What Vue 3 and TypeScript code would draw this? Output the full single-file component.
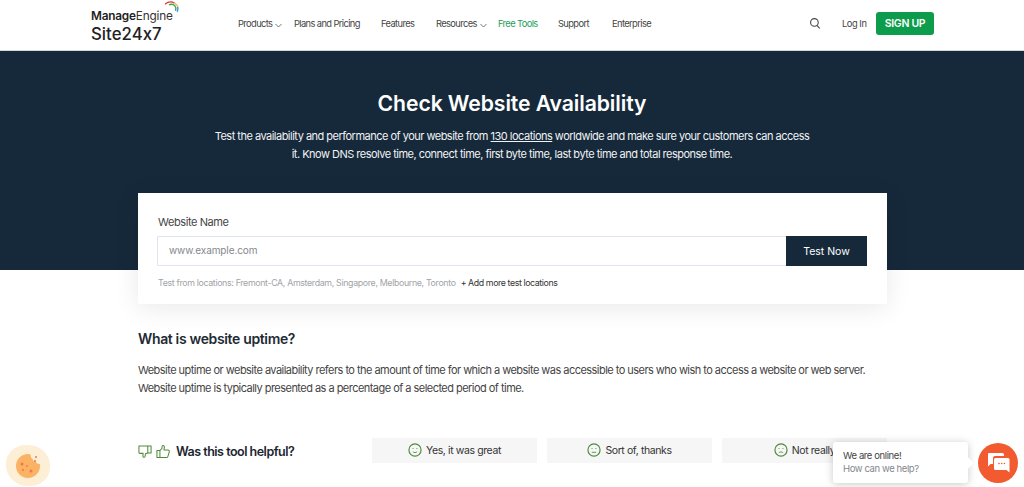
<script setup lang="ts">
const navItems: { label: string; caret?: boolean; active?: boolean; width: number }[] = [
  { label: 'Products', caret: true, width: 56 },
  { label: 'Plans and Pricing', width: 87 },
  { label: 'Features', width: 55 },
  { label: 'Resources', caret: true, width: 62 },
  { label: 'Free Tools', active: true, width: 60 },
  { label: 'Support', width: 54 },
  { label: 'Enterprise', width: 60 }
]
const options = [
  { label: 'Yes, it was great', mouth: 'M6.2 11.2c1.4 1.5 4.2 1.5 5.6 0' },
  { label: 'Sort of, thanks', mouth: 'M6.2 12h5.6' },
  { label: 'Not really', mouth: 'M6.2 12.6c1.4-1.5 4.2-1.5 5.6 0' }
]
</script>

<template>
  <div class="page">
    <header class="topbar">
      <div class="logo">
        <div class="me">
          <span class="me-bold">Manage</span><span class="me-light">Engine</span>
          <svg class="arc" width="16" height="14" viewBox="0 0 16 14" fill="none" stroke-width="1.300">
            <path d="M1 3.200C4 .8 8 .6 10.600 2.200" stroke="#e4342c" />
            <path d="M10.600 2.200c1.500.9 2.600 2 3.100 3.400" stroke="#f5b52e" />
            <path d="M13.700 5.600c.5 1.600.3 3.400-.5 5.200" stroke="#2f8fd0" />
            <path d="M5 3.800c2.200-.9 4.400-.5 5.800 1 1.100 1.200 1.300 3 .8 5" stroke="#3ca655" />
          </svg>
        </div>
        <div class="brand">Site24x7</div>
      </div>
      <nav class="nav">
        <a
          v-for="item in navItems"
          :key="item.label"
          class="nav-item"
          :class="{ active: item.active }"
          :style="{ width: item.width + 'px' }"
        >
          {{ item.label }}
          <svg v-if="item.caret" class="caret" width="7" height="5" viewBox="0 0 7 5" fill="none" stroke="#555" stroke-width=".8"><path d="M.5 1l3 3 3-3" /></svg>
        </a>
      </nav>
      <div class="actions">
        <svg width="10" height="11" viewBox="0 0 10 11" fill="none" stroke="#444" stroke-width="1.100"><circle cx="4.400" cy="4.400" r="3.800" /><path d="M7 7.300l2.700 3.200" /></svg>
        <a class="login">Log In</a>
        <a class="signup">SIGN UP</a>
      </div>
    </header>

    <section class="hero">
      <h1>Check Website Availability</h1>
      <p>
        Test the availability and performance of your website from <u>130 locations</u> worldwide and make sure your customers can access<br />
        it. Know DNS resolve time, connect time, first byte time, last byte time and total response time.
      </p>
    </section>

    <main class="content">
      <section class="card">
        <label class="field-label">Website Name</label>
        <div class="field">
          <div class="input">www.example.com</div>
          <button class="test">Test Now</button>
        </div>
        <div class="locations">
          <span class="loc-list">Test from locations: Fremont-CA, Amsterdam, Singapore, Melbourne, Toronto</span>
          <a class="add">+ Add more test locations</a>
        </div>
      </section>

      <section class="about">
        <h2>What is website uptime?</h2>
        <p>Website uptime or website availability refers to the amount of time for which a website was accessible to users who wish to access a website or web server. Website uptime is typically presented as a percentage of a selected period of time.</p>
      </section>

      <section class="feedback">
        <div class="question">
          <svg width="14" height="15" viewBox="0 0 15 15" fill="none" stroke="#4f8a3c" stroke-width="1.100" stroke-linejoin="round"><path d="M1 1.500h9.500v7.500L8 10l-.5 3c-.2 1-2 1-2.300-.2L5.500 9.500H2C1.300 9.500.8 9 1 8.200z" /><path d="M10.500 1.500H14V9h-3.500" /></svg>
          <svg class="up" width="14" height="15" viewBox="0 0 15 15" fill="none" stroke="#4f8a3c" stroke-width="1.100" stroke-linejoin="round"><path d="M1 6.500h3.200V14H1zM4.200 6.500L6.500 4V1.800c0-1 2.300-1 2.500.7l-.5 3.500H13c1 0 1.500 1 1.200 2l-1.500 5c-.2.700-.7 1-1.500 1h-7" /></svg>
          <strong>Was this tool helpful?</strong>
        </div>
        <div class="options">
          <button v-for="o in options" :key="o.label" class="option">
            <svg width="14" height="14" viewBox="0 0 18 18" fill="none" stroke="#4f8a3c" stroke-width="1.500">
              <circle cx="9" cy="9" r="7.800" />
              <circle cx="6.500" cy="7" r=".7" fill="#4f8a3c" stroke="none" />
              <circle cx="11.500" cy="7" r=".7" fill="#4f8a3c" stroke="none" />
              <path :d="o.mouth" stroke-width="1.100" />
            </svg>
            {{ o.label }}
          </button>
        </div>
      </section>
    </main>

    <div class="cookie">
      <svg width="26" height="26" viewBox="0 0 26 26">
        <path d="M13 1C6.400 1 1 6.400 1 13s5.400 12 12 12 12-5.400 12-12c0-.8-.1-1.500-.2-2.200-1.600.6-3.400-.3-3.800-2-1.800.3-3.300-1-3.300-2.800-1.500-.6-2.400-2.200-1.900-4C15 1.400 14 1 13 1z" fill="#fbb264" />
        <g fill="#ee7a45">
          <circle cx="7" cy="11" r="1.500" />
          <circle cx="12" cy="13" r=".9" />
          <circle cx="8" cy="17" r="1.100" />
          <circle cx="16" cy="18" r="1.500" />
          <circle cx="21" cy="4" r="1" />
          <circle cx="20" cy="8" r="1" />
        </g>
      </svg>
    </div>

    <div class="chat">
      <div class="bubble">
        <div class="online">We are online!</div>
        <div class="help">How can we help?</div>
      </div>
      <div class="chat-btn">
        <svg width="23" height="20" viewBox="0 0 23 20">
          <path d="M1.500 0h14A1.500 1.500 0 0 1 17 1.500V3H8a2 2 0 0 0-2 2v6H3.500L1 13.500v-12A1.500 1.500 0 0 1 1.500 0z" fill="#fff" />
          <path d="M8.500 5H21a1.500 1.500 0 0 1 1.500 1.500V16l0 3.500-3-2.500H8.500A1.500 1.500 0 0 1 7 15.500v-9A1.500 1.500 0 0 1 8.500 5z" fill="#fff" />
          <g fill="#f25a30"><circle cx="12" cy="10.500" r=".8" /><circle cx="14.700" cy="10.500" r=".8" /><circle cx="17.400" cy="10.500" r=".8" /></g>
        </svg>
      </div>
    </div>
  </div>
</template>

<style>
html,
body {
  margin: 0;
  overflow: hidden;
  background: #fff;
}
</style>

<style scoped>
.page {
  position: relative;
  width: 1024px;
  height: 487px;
  overflow: hidden;
  font-family: Inter, "Liberation Sans", sans-serif;
  color: #232b33;
}
.topbar {
  display: flex;
  align-items: center;
  height: 50px;
  padding: 0 90px 0 91px;
  border-bottom: 1px solid #d8d8d8;
  box-sizing: content-box;
}
.logo {
  width: 147px;
  padding-top: 2px;
}
.me {
  position: relative;
  font-size: 11.800px;
  line-height: 15px;
  letter-spacing: -.2px;
  color: #222;
}
.me-bold {
  font-weight: 600;
}
.me-light {
  font-weight: 400;
  color: #333;
}
.arc {
  position: absolute;
  left: 73px;
  top: -8px;
}
.brand {
  font-size: 16.800px;
  line-height: 20px;
  font-weight: 500;
  letter-spacing: .02px;
  font-feature-settings: "calt" 0;
  color: #222;
}
.nav {
  display: flex;
  align-items: center;
  width: 434px;
  flex: none;
  padding-bottom: 3px;
}
.nav-item {
  font-size: 9.300px;
  letter-spacing: -.6px;
  color: #444;
  white-space: nowrap;
  flex: none;
}
.nav-item.active {
  color: #1e9e57;
}
.caret {
  margin-left: 1px;
  vertical-align: -1px;
}
.actions {
  margin-left: auto;
  display: flex;
  align-items: center;
  padding-bottom: 3px;
}
.login {
  margin-left: 22px;
  width: 24px;
  white-space: nowrap;
  font-size: 9.300px;
  letter-spacing: -.45px;
  color: #444;
}
.signup {
  margin-left: 10px;
  width: 58px;
  height: 23px;
  border-radius: 3px;
  background: #0d9c4c;
  color: #fff;
  font-size: 10.500px;
  font-weight: 600;
  letter-spacing: -.3px;
  display: flex;
  align-items: center;
  justify-content: center;
}
.hero {
  height: 219px;
  padding-top: 38px;
  box-sizing: border-box;
  background: #16293a;
  color: #fff;
  text-align: center;
}
.hero h1 {
  margin: 0;
  font-size: 21.200px;
  line-height: 28px;
  font-weight: 600;
  letter-spacing: -.1px;
}
.hero p {
  margin: 11px 0 0;
  font-size: 11px;
  line-height: 17.500px;
  letter-spacing: -.51px;
  color: #f0f2f4;
}
.content {
  margin: -77px 0 0 138px;
  width: 749px;
  position: relative;
}
.card {
  height: 111px;
  box-sizing: border-box;
  padding: 22px 20px 0;
  background: #fff;
  box-shadow: 0 4px 24px rgba(0, 0, 0, .09);
}
.field-label {
  display: block;
  font-size: 11px;
  line-height: 14px;
  color: #444;
  letter-spacing: -.4px;
}
.field {
  display: flex;
  height: 30px;
  margin: 7px 0 0 -1px;
}
.input {
  flex: 1;
  border: 1.500px solid #dfe4f0;
  border-right: 0;
  border-radius: 2px 0 0 2px;
  padding-left: 11px;
  font-size: 10px;
  line-height: 26px;
  letter-spacing: -.1px;
  color: #84888d;
}
.test {
  width: 81px;
  border: 0;
  background: #16293a;
  color: #fff;
  font-family: inherit;
  font-size: 10.500px;
  padding: 0;
}
.locations {
  margin-top: 10px;
  font-size: 8.800px;
  line-height: 14px;
  letter-spacing: -.33px;
  white-space: nowrap;
}
.loc-list {
  color: #a1a4a8;
}
.add {
  margin-left: 5px;
  color: #333;
  letter-spacing: -.4px;
}
.about {
  padding-top: 26px;
}
.about h2 {
  margin: 0;
  font-size: 14px;
  line-height: 18px;
  font-weight: 600;
  letter-spacing: -.35px;
}
.about p {
  margin: 14px 0 0;
  font-size: 11px;
  line-height: 17.500px;
  letter-spacing: -.535px;
  color: #444;
}
.feedback {
  display: flex;
  align-items: center;
  margin-top: 40px;
  height: 26px;
}
.question {
  display: flex;
  align-items: center;
  width: 235px;
  padding-top: 2px;
}
.up {
  margin-left: 4px;
}
.question strong {
  margin-left: 6px;
  font-size: 12.500px;
  font-weight: 600;
  letter-spacing: -.5px;
  color: #1c2630;
}
.options {
  display: flex;
  gap: 10px;
}
.option {
  width: 165px;
  height: 25px;
  border: 0;
  padding: 0;
  background: #f6f6f6;
  font-family: inherit;
  font-size: 10.500px;
  letter-spacing: -.4px;
  color: #333;
  display: flex;
  align-items: center;
  justify-content: center;
  gap: 4px;
}
.cookie {
  position: absolute;
  left: 6px;
  top: 445px;
  width: 44px;
  height: 41px;
  border-radius: 45% 50% 45% 50%;
  background: #fdeed6;
  display: flex;
  align-items: center;
  justify-content: center;
}
.chat {
  position: absolute;
  left: 833px;
  top: 442px;
  display: flex;
  align-items: center;
}
.bubble {
  position: relative;
  width: 135px;
  height: 41px;
  box-sizing: border-box;
  padding: 7px 10px;
  background: #fff;
  border-radius: 3px;
  box-shadow: 0 1px 8px rgba(0, 0, 0, .22);
  font-size: 9.500px;
  line-height: 13px;
  letter-spacing: -.4px;
}
.bubble::after {
  content: "";
  position: absolute;
  right: -4px;
  top: 17px;
  width: 8px;
  height: 8px;
  background: #fff;
  transform: rotate(45deg);
}
.online {
  color: #444;
}
.help {
  color: #84888d;
}
.chat-btn {
  margin-left: 10px;
  width: 40px;
  height: 40px;
  border-radius: 50%;
  background: #f25a30;
  display: flex;
  align-items: center;
  justify-content: center;
}
</style>
